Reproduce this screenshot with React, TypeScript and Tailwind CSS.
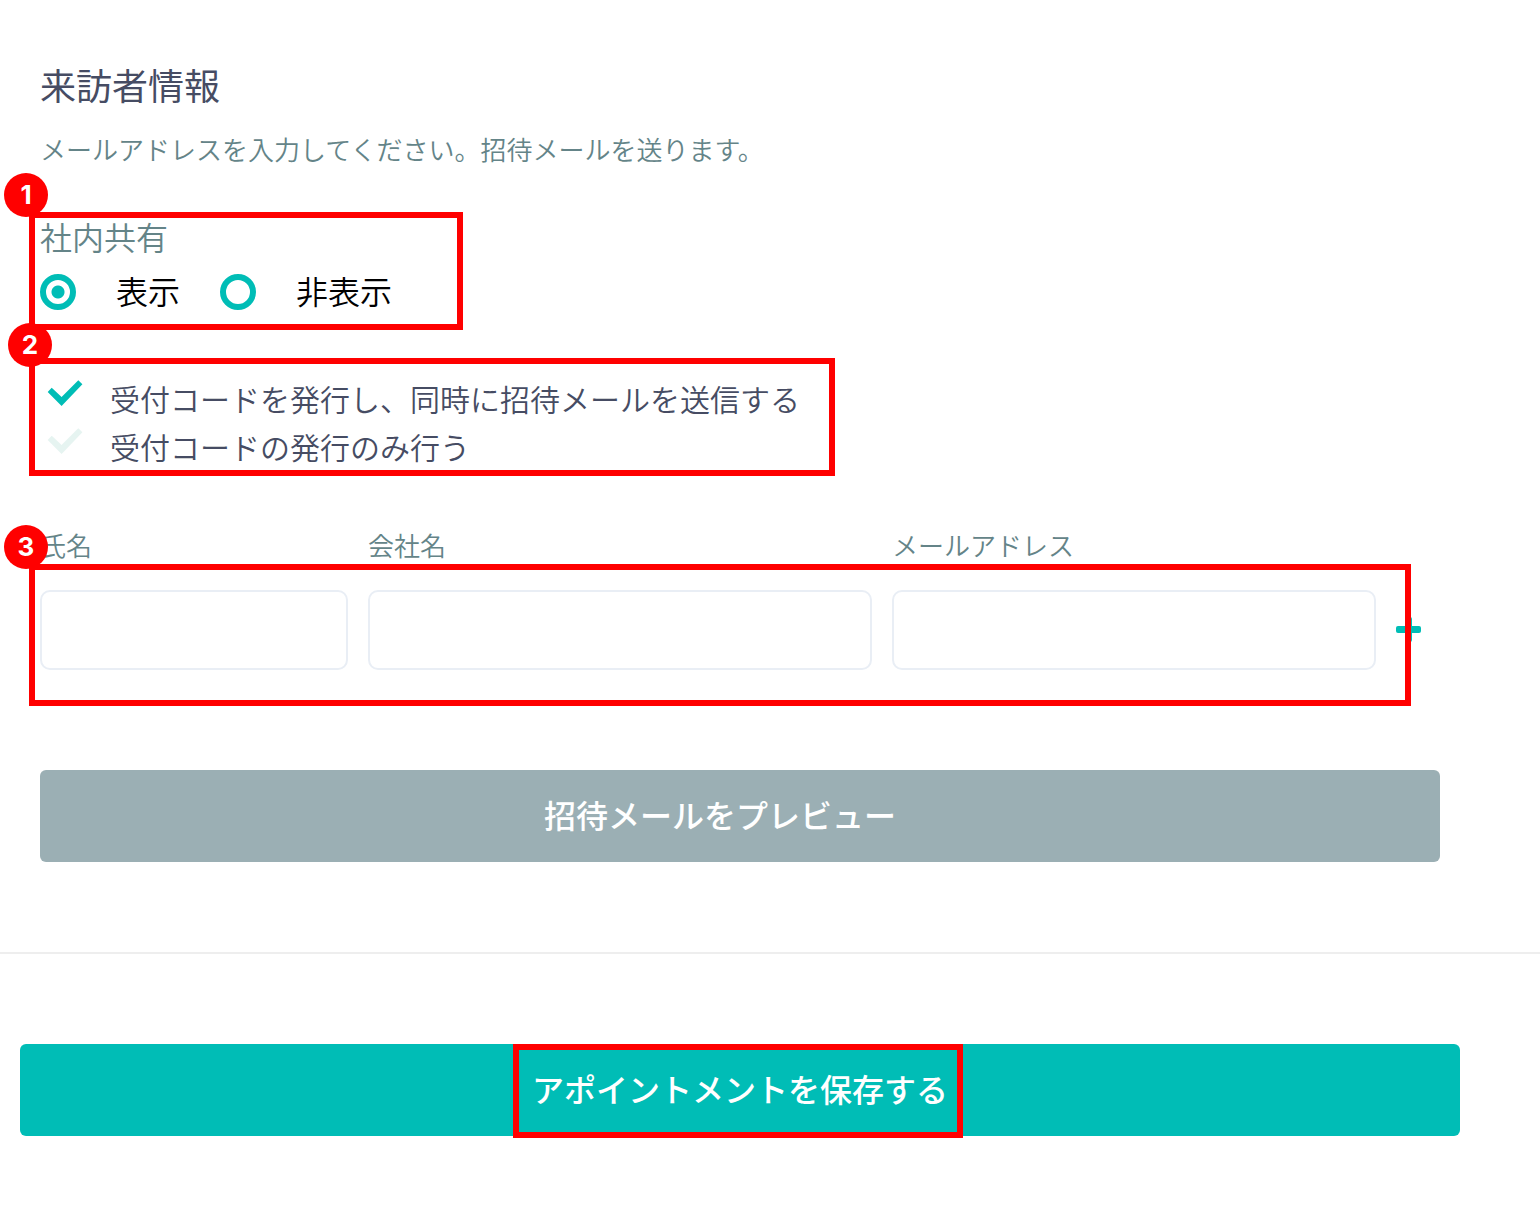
import React, { useId, useState } from "react";

function Marker({ n, className }: { n: number; className: string }) {
  return (
    <span
      className={`pointer-events-none absolute z-20 flex size-11 items-center justify-center rounded-full bg-[#ff0000] font-['Inter',sans-serif] text-[26px] leading-none font-bold text-white ${className}`}
    >
      {n}
    </span>
  );
}

function Frame({ className }: { className: string }) {
  return (
    <span
      aria-hidden="true"
      className={`pointer-events-none absolute z-10 border-6 border-[#ff0000] ${className}`}
    />
  );
}

function RadioOption({ label, defaultChecked }: { label: string; defaultChecked?: boolean }) {
  return (
    <label className="flex items-center gap-10 text-[32px] font-[350] text-black">
      <input
        type="radio"
        name="share"
        defaultChecked={defaultChecked}
        className="size-9 shrink-0 appearance-none rounded-full border-6 border-[#00bdb6] bg-white bg-[radial-gradient(circle,#00bdb6_6px,#ffffff_7px)] bg-clip-padding not-checked:bg-none"
      />
      <span className="pb-1 leading-8">{label}</span>
    </label>
  );
}

function CheckOption({
  label,
  checked,
  onSelect,
}: {
  label: string;
  checked: boolean;
  onSelect: () => void;
}) {
  return (
    <label className="relative flex h-12 gap-7 pl-2 text-[30px] leading-11 font-[350] text-[#464c63]">
      <input type="checkbox" checked={checked} onChange={onSelect} className="peer sr-only" />
      <svg
        viewBox="0 0 34 26"
        aria-hidden="true"
        className="mt-1 h-[26px] w-[34px] shrink-0 overflow-visible fill-[#e6f4f1] peer-checked:fill-[#00bdb6]"
      >
        <path d="M-.3 11.9 3.7 7.8 13.6 17 30.3 .2 34.4 4.2 13.6 26Z" />
      </svg>
      {label}
    </label>
  );
}

function Field({ label, type = "text" }: { label: string; type?: string }) {
  const id = useId();
  return (
    <div>
      <label htmlFor={id} className="block text-[26px] leading-[38px] font-[350] text-[#648488]">
        {label}
      </label>
      <input
        id={id}
        type={type}
        className="mt-[26px] block h-20 w-full rounded-[10px] border-2 border-[#e9eef5] bg-white px-4 text-[26px] text-[#464c63]"
      />
    </div>
  );
}

export default function App() {
  const [mode, setMode] = useState<"send" | "issue">("send");
  return (
    <main
      lang="ja"
      className="min-h-screen bg-white pt-[60px] pb-[74px] font-['Noto_Sans_CJK_JP',sans-serif]"
    >
      <form onSubmit={(e) => e.preventDefault()}>
        <section className="mr-[100px] ml-10">
          <h1 className="text-[36px] leading-12 text-[#464c63]">来訪者情報</h1>
          <p className="mt-[22px] text-[26px] leading-[38px] font-[350] text-[#648488]">
            メールアドレスを入力してください。招待メールを送ります。
          </p>

          <div
            role="radiogroup"
            aria-labelledby="share-label"
            className="relative mt-[50px]"
          >
            <Frame className="-top-1.5 -left-[11px] h-[118px] w-[434px]" />
            <Marker n={1} className="-top-[45px] -left-9" />
            <div id="share-label" className="text-[32px] leading-9 font-[350] text-[#648488]">
              社内共有
            </div>
            <div className="mt-5 flex gap-10">
              <RadioOption label="表示" defaultChecked />
              <RadioOption label="非表示" />
            </div>
          </div>

          <div className="relative mt-[66px]">
            <Frame className="-top-[18px] -left-[11px] h-[118px] w-[806px]" />
            <Marker n={2} className="-top-[53px] -left-8" />
            <CheckOption
              label="受付コードを発行し、同時に招待メールを送信する"
              checked={mode === "send"}
              onSelect={() => setMode("send")}
            />
            <CheckOption
              label="受付コードの発行のみ行う"
              checked={mode === "issue"}
              onSelect={() => setMode("issue")}
            />
          </div>

          <div className="relative mt-[54px] grid grid-cols-[308fr_504fr_484fr_44px] gap-x-5">
            <Frame className="top-[38px] right-[29px] -bottom-9 -left-[11px]" />
            <Marker n={3} className="-top-px -left-9" />
            <Field label="氏名" />
            <Field label="会社名" />
            <Field label="メールアドレス" type="email" />
            <button
              type="button"
              aria-label="来訪者を追加"
              className="h-20 w-[25px] self-end pb-0.5"
            >
              <svg viewBox="0 0 25 25" className="size-[25px] fill-[#00bdb6]">
                <rect x="0" y="9" width="25" height="7" rx="2" />
                <rect x="9" y="0" width="7" height="25" rx="2" />
              </svg>
            </button>
          </div>

          <button
            type="button"
            className="mt-[100px] block h-23 w-full rounded-md bg-[#9bafb4] pr-10 pb-1 text-[32px] leading-12 font-medium text-white"
          >
            招待メールをプレビュー
          </button>
        </section>

        <hr className="mt-[90px] border-t-2 border-[#eeeeee]" />

        <div className="mt-[90px] mr-20 ml-5">
          <button
            type="submit"
            className="flex h-23 w-full items-center justify-center rounded-md bg-[#00bdb6] pb-1 text-[32px] leading-12 font-medium text-white"
          >
            <span className="relative">
              アポイントメントを保存する
              <Frame className="-top-5 -right-[15px] -left-[19px] h-[94px]" />
            </span>
          </button>
        </div>
      </form>
    </main>
  );
}
